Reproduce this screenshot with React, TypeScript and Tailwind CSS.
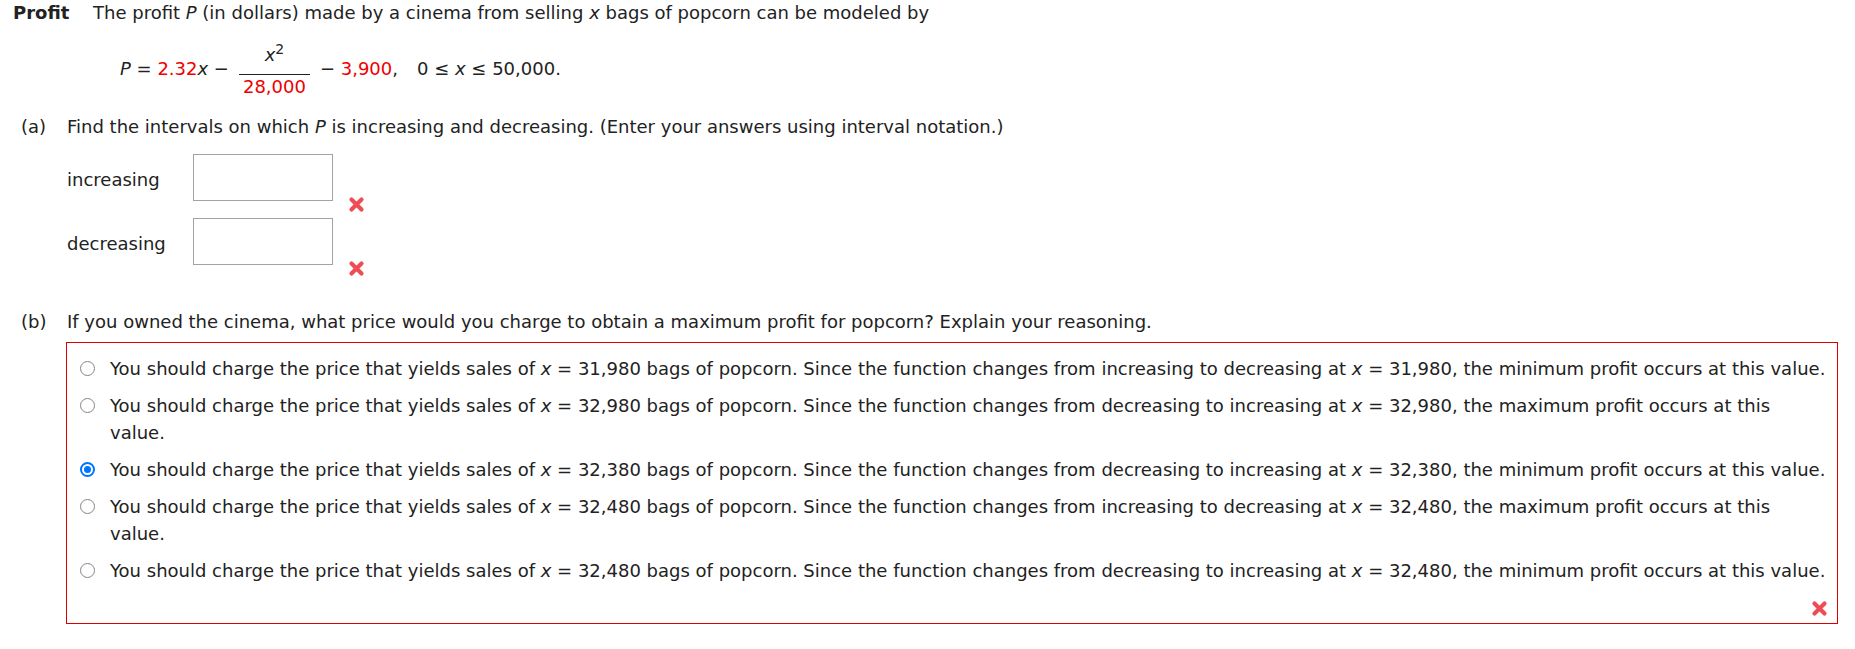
import React, {FC} from 'react';

const RedX: FC = () => (
    <svg width="17" height="17" viewBox="0 0 17 17" className="block">
      <path d="M3.5 3.5 L13.5 13.5 M13.5 3.5 L3.5 13.5" stroke="#ef4d56" strokeWidth="4.2" strokeLinecap="round"/>
    </svg>
);

const Radio: FC<{checked?: boolean}> = ({checked}) =>
    checked
        ? <span className="mt-[6px] w-[15px] h-[15px] shrink-0 rounded-full border-[2px] border-[#0075ff] bg-white flex items-center justify-center">
            <span className="w-[7px] h-[7px] rounded-full bg-[#0075ff]"/>
          </span>
        : <span className="mt-[6px] w-[15px] h-[15px] shrink-0 rounded-full border border-[#858585] bg-white"/>;

const X = () => <i>x</i>;

const options = [
  {n: '31,980', from: 'increasing', to: 'decreasing', kind: 'minimum'},
  {n: '32,980', from: 'decreasing', to: 'increasing', kind: 'maximum'},
  {n: '32,380', from: 'decreasing', to: 'increasing', kind: 'minimum', checked: true},
  {n: '32,480', from: 'increasing', to: 'decreasing', kind: 'maximum'},
  {n: '32,480', from: 'decreasing', to: 'increasing', kind: 'minimum'},
];

const App: FC = () => {
  return (
      <div className="w-[1855px] min-h-[649px] bg-white text-[#222] text-[18px]" style={{fontFamily: '"DejaVu Sans", Verdana, sans-serif'}}>
        {/* heading */}
        <div className="flex pl-[13px] h-[26px] leading-[26px]">
          <b className="w-[80px]">Profit</b>
          <span>The profit <i>P</i> (in dollars) made by a cinema from selling <X/> bags of popcorn can be modeled by</span>
        </div>

        {/* formula */}
        <div className="mt-[18px] ml-[120px] h-[54px] flex items-start">
          <span className="mt-[14px] leading-[22px] whitespace-pre"><i>P</i> = <span className="text-[#ee0000]">2.32</span><X/> −</span>
          <div className="ml-[10px] flex flex-col items-stretch">
            <div className="h-[24px] leading-[22px] text-center"><X/><sup className="text-[14px]">2</sup></div>
            <div className="mt-[6px] h-[1px] bg-[#222]"/>
            <div className="h-[22px] leading-[23px] px-[4px] text-[#ee0000]">28,000</div>
          </div>
          <span className="mt-[14px] ml-[10px] leading-[22px] whitespace-pre">− <span className="text-[#ee0000]">3,900</span>,</span>
          <span className="mt-[14px] ml-[19px] leading-[22px]">0 ≤ <X/> ≤ 50,000.</span>
        </div>

        {/* part a */}
        <div className="mt-[16px] flex h-[26px] leading-[26px]">
          <span className="w-[67px] pl-[21px]">(a)</span>
          <span>Find the intervals on which <i>P</i> is increasing and decreasing. (Enter your answers using interval notation.)</span>
        </div>

        <div className="mt-[14px] ml-[67px] flex flex-col gap-[17px]">
          {['increasing', 'decreasing'].map(label => (
              <div key={label} className="flex items-start h-[47px]">
                <span className="w-[126px] leading-[52px]">{label}</span>
                <div className="w-[140px] h-[47px] border border-[#a3a3a3] bg-white"/>
                <div className="ml-[15px] mt-[42px]"><RedX/></div>
              </div>
          ))}
        </div>

        {/* part b */}
        <div className="mt-[44px] flex h-[26px] leading-[26px]">
          <span className="w-[67px] pl-[21px]">(b)</span>
          <span>If you owned the cinema, what price would you charge to obtain a maximum profit for popcorn? Explain your reasoning.</span>
        </div>

        <div className="mt-[7px] ml-[66px] w-[1772px] border border-[#dd0000] pt-[12px] pb-[6px] pl-[13px] pr-[8px]">
          <div className="flex flex-col gap-[10px]">
            {options.map((o, i) => (
                <div key={i} className="flex items-start leading-[27px]">
                  <Radio checked={o.checked}/>
                  <p className="ml-[15px] max-w-[1717px]">
                    <span>You should charge the price that yields sales of </span><X/>
                    <span> = {o.n} bags of popcorn. Since the function changes from {o.from} to {o.to} at </span><X/>
                    <span> = {o.n}, the {o.kind} profit occurs at this </span><span>value.</span>
                  </p>
                </div>
            ))}
          </div>
          <div className="mt-[16px] flex justify-end pr-[1px]">
            <RedX/>
          </div>
        </div>
      </div>
  );
};

export default App;
